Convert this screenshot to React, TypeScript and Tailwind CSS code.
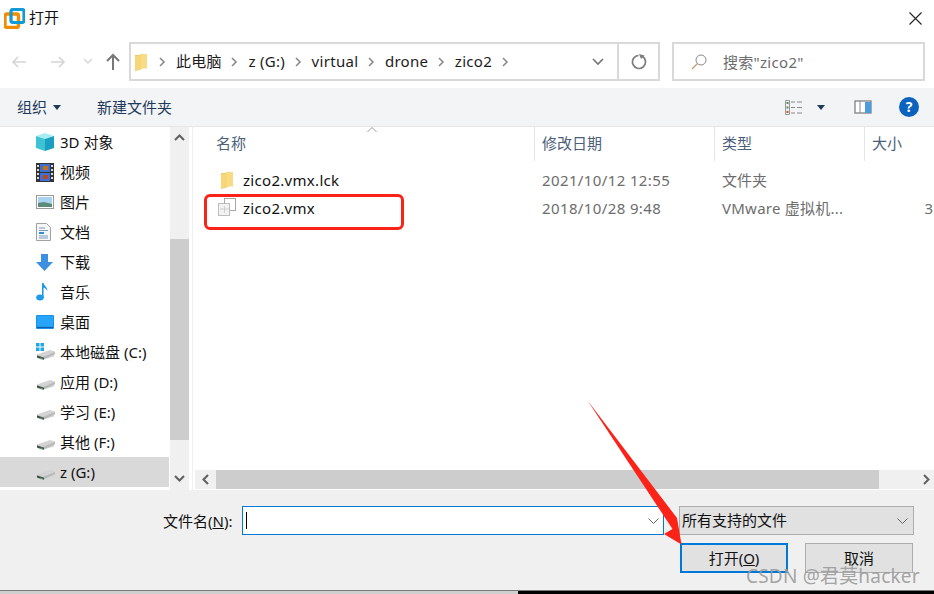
import { ReactNode } from "react";

const font = { fontFamily: '"Noto Sans", "Noto Sans CJK SC", sans-serif' };

function Chevron() {
  return (
    <svg width="8" height="12" viewBox="0 0 8 12" className="shrink-0">
      <path d="M2 2l4 4-4 4" fill="none" stroke="#8a8a8a" strokeWidth="1.6" />
    </svg>
  );
}

function FolderIcon({ className }: { className?: string }) {
  return (
    <svg width="13" height="18" viewBox="0 0 13 18" className={className}>
      <path d="M0 2h6l1-2v16l-7 2z" fill="#e8c35e" />
      <path d="M5 1h7v14.500h-7z" fill="#f8dc85" />
      <path d="M0 3l6-1v14l-6 2z" fill="#f6d675" />
    </svg>
  );
}

function DriveIcon({ win }: { win?: boolean }) {
  return (
    <svg width="20" height="18" viewBox="0 0 20 18">
      {win && (
        <g fill="#1ea5e8">
          <path d="M0 0h3.500v3.500H0zM4.500 0H8v3.500H4.500zM0 4.500h3.500V8H0zM4.500 4.500H8V8H4.500z" />
        </g>
      )}
      <path d="M1 11.500L14 7l5 1.500-1 5L6 17l-5-2z" fill="#d3d3d3" />
      <path d="M1 12l6 2 12-5v2L7 16.500 1 14.500z" fill="#b8b8b8" />
      <path d="M1 12.500l7 2.200v2L1 14.500z" fill="#3c4a44" />
      <path d="M4.500 14.500l2 .6v1l-2-.6z" fill="#4cc35a" />
    </svg>
  );
}

function CubeIcon() {
  return (
    <svg width="18" height="18" viewBox="0 0 18 18">
      <path d="M9 0l9 3-9 3-9-3z" fill="#a5eef2" />
      <path d="M0 3l9 3v12l-9-3z" fill="#3cc4d4" />
      <path d="M18 3L9 6v12l9-3z" fill="#1a9fc0" />
    </svg>
  );
}

function FilmIcon() {
  return (
    <svg width="18" height="19" viewBox="0 0 18 19">
      <rect width="18" height="19" fill="#333" />
      <rect x="4" y="1" width="10" height="8" fill="#3f6fd0" />
      <rect x="4" y="10" width="10" height="8" fill="#3f6fd0" />
      <rect x="7" y="3" width="5" height="4" fill="#c2701e" />
      <rect x="7" y="12" width="5" height="4" fill="#b5482a" />
      <path d="M1 2h2v2H1zM1 6h2v2H1zM1 10h2v2H1zM1 14h2v2H1zM15 2h2v2h-2zM15 6h2v2h-2zM15 10h2v2h-2zM15 14h2v2h-2z" fill="#ddd" />
    </svg>
  );
}

function PictureIcon() {
  return (
    <svg width="18" height="14" viewBox="0 0 18 14">
      <rect x=".5" y=".5" width="17" height="13" fill="#fff" stroke="#9a9a9a" />
      <rect x="2" y="2" width="14" height="10" fill="#a9d3ee" />
      <path d="M2 8l6-1 8 2v3H2z" fill="#5d8a78" />
    </svg>
  );
}

function DocIcon() {
  return (
    <svg width="15" height="18" viewBox="0 0 15 18">
      <path d="M.5.5h10l4 4v13H.5z" fill="#f6f6f6" stroke="#a0a0a0" />
      <path d="M3 5h6M3 7.500h9M3 13h9M3 15h9" stroke="#7a9cc0" />
      <path d="M3 10h5" stroke="#2e8fd8" strokeWidth="2" />
    </svg>
  );
}

function DownloadIcon() {
  return (
    <svg width="17" height="17" viewBox="0 0 17 17">
      <path d="M5 0h7v8h5l-8.500 9L0 8h5z" fill="#3d8fe0" />
    </svg>
  );
}

function MusicIcon() {
  return (
    <svg width="12" height="18" viewBox="0 0 12 18">
      <ellipse cx="4" cy="14.500" rx="3.800" ry="3" fill="#1e9be8" />
      <path d="M6 0h1.600c.5 3 4 4 3.800 8-1-2-2.500-3-3.800-3.200V15H6z" fill="#1e9be8" />
    </svg>
  );
}

function DesktopIcon() {
  return (
    <svg width="18" height="14" viewBox="0 0 18 14">
      <rect width="18" height="14" rx="1" fill="#1c8fe6" />
      <rect x="1" y="1" width="16" height="10.500" fill="#26a5fb" />
      <rect x="1" y="12" width="16" height="1" fill="#0d5fa8" />
    </svg>
  );
}

const places: { icon: ReactNode; label: string; selected?: boolean }[] = [
  { icon: <CubeIcon />, label: "3D 对象" },
  { icon: <FilmIcon />, label: "视频" },
  { icon: <PictureIcon />, label: "图片" },
  { icon: <DocIcon />, label: "文档" },
  { icon: <DownloadIcon />, label: "下载" },
  { icon: <MusicIcon />, label: "音乐" },
  { icon: <DesktopIcon />, label: "桌面" },
  { icon: <DriveIcon win />, label: "本地磁盘 (C:)" },
  { icon: <DriveIcon />, label: "应用 (D:)" },
  { icon: <DriveIcon />, label: "学习 (E:)" },
  { icon: <DriveIcon />, label: "其他 (F:)" },
  { icon: <DriveIcon />, label: "z (G:)", selected: true },
];

const crumbs = ["此电脑", "z (G:)", "virtual", "drone", "zico2"];

export default function App() {
  return (
    <div className="relative w-[934px] h-[594px] overflow-hidden bg-white flex flex-col text-[15px] leading-5 text-[#111]" style={font}>
      {/* Title bar */}
      <div className="h-[42px] shrink-0 flex items-center pl-1 pr-[12px]">
        <svg width="21" height="21" viewBox="0 0 21 21" className="mr-[4px] -mt-[6px]">
          <rect x="1" y="6" width="13.500" height="13.500" rx="2" fill="none" stroke="#f28c00" strokeWidth="3.400" />
          <rect x="7" y="1.500" width="13" height="13" rx="2" fill="none" stroke="#0f9ad8" strokeWidth="3.200" />
        </svg>
        <span className="-mt-[8px] text-[15px]">打开</span>
        <svg width="13" height="13" viewBox="0 0 13 13" className="ml-auto -mt-[6px]">
          <path d="M.5.500l12 12M12.500.500l-12 12" stroke="#222" strokeWidth="1.100" />
        </svg>
      </div>

      {/* Navigation row */}
      <div className="h-[46px] shrink-0 flex items-start">
        <div className="w-[129px] h-[39px] shrink-0 flex items-center pl-[11px]">
          <svg width="16" height="14" viewBox="0 0 16 14" className="mr-[23px]">
            <path d="M15 7H2M7 2L2 7l5 5" fill="none" stroke="#d5d5d5" strokeWidth="1.600" />
          </svg>
          <svg width="16" height="14" viewBox="0 0 16 14" className="mr-[17px]">
            <path d="M1 7h13M9 2l5 5-5 5" fill="none" stroke="#d5d5d5" strokeWidth="1.600" />
          </svg>
          <svg width="10" height="7" viewBox="0 0 10 7" className="mr-[13px]">
            <path d="M1 1l4 4 4-4" fill="none" stroke="#d5d5d5" strokeWidth="1.400" />
          </svg>
          <svg width="14" height="17" viewBox="0 0 14 17">
            <path d="M7 17V2M1 8l6-6 6 6" fill="none" stroke="#777" strokeWidth="2" />
          </svg>
        </div>
        <div className="w-[531px] h-[39px] shrink-0 border-2 border-[#d9d9d9] flex items-center">
          <FolderIcon className="ml-[4px] mr-[10px]" />
          <div className="flex items-center flex-1 text-[#1c1c1c] tracking-[0.3px]">
            {crumbs.map((c) => (
              <div key={c} className="flex items-center">
                <Chevron />
                <span className="ml-[10px] mr-[8.500px] mt-[-1px]">{c}</span>
              </div>
            ))}
            <Chevron />
          </div>
          <svg width="12" height="8" viewBox="0 0 12 8" className="mr-[13px]">
            <path d="M1 1l5 5 5-5" fill="none" stroke="#777" strokeWidth="1.700" />
          </svg>
          <div className="w-[41px] h-full border-l-2 border-[#d9d9d9] flex items-center justify-center">
            <svg width="16" height="16" viewBox="0 0 16 16">
              <path d="M11.500 2.500a6.500 6.500 0 1 1-4-1" fill="none" stroke="#7d7d7d" strokeWidth="1.700" />
              <path d="M8 0l5.500 1.500L10 5z" fill="#7d7d7d" />
            </svg>
          </div>
        </div>
        <div className="ml-[12px] w-[253px] h-[39px] shrink-0 border-2 border-[#d9d9d9] flex items-center pl-[17px] text-[#6d6d6d] tracking-[0.3px]">
          <svg width="16" height="16" viewBox="0 0 16 16" className="mr-[16px]">
            <circle cx="10" cy="6" r="5" fill="none" stroke="#8a8a8a" />
            <path d="M6.500 9.500L1 15" stroke="#c79a70" strokeWidth="1.200" />
          </svg>
          搜索"zico2"
        </div>
      </div>

      {/* Toolbar */}
      <div className="h-[39px] shrink-0 bg-[#f3f4f6] border-b border-[#e6e6e6] flex items-center pl-[17px] pr-[15px] text-[15px] text-[#1e395b]">
        <span>组织</span>
        <svg width="8" height="5" viewBox="0 0 8 5" className="ml-[6px] mr-[36px]">
          <path d="M0 0h8L4 5z" fill="#1e395b" />
        </svg>
        <span>新建文件夹</span>
        <svg width="17" height="15" viewBox="0 0 17 15" className="ml-auto mr-[15px]">
          <path d="M.5.500h4v14h-4z" fill="#eee" stroke="#999" />
          <path d="M1.500 2h2v2h-2zM1.500 6.500h2v2h-2z" fill="#5a8a5a" />
          <path d="M1.500 11h2v2h-2z" fill="#c05a2a" />
          <path d="M6 2h4M12 2h5M6 7.500h4M12 7.500h5M6 13h4M12 13h5" stroke="#888" />
        </svg>
        <svg width="8" height="5" viewBox="0 0 8 5" className="mr-[29px]">
          <path d="M0 0h8L4 5z" fill="#1e395b" />
        </svg>
        <svg width="18" height="14" viewBox="0 0 18 14" className="mr-[27px]">
          <rect x="1" y="1" width="16" height="12" fill="#fff" stroke="#8a8a8a" strokeWidth="1.400" />
          <rect x="11" y="2" width="6" height="11" fill="#4a9be0" />
          <path d="M6 1v12" stroke="#8a8a8a" />
        </svg>
        <div className="w-[20px] h-[20px] rounded-full bg-[#0b63bd] text-white text-[14px] font-bold flex items-center justify-center">?</div>
      </div>

      {/* Body */}
      <div className="h-[363px] shrink-0 flex">
        <div className="w-[170px] shrink-0 flex flex-col">
          {places.map((p) => (
            <div key={p.label} className={`h-[30px] shrink-0 flex items-center ${p.selected ? "bg-[#d9d9d9] w-[169px]" : ""}`}>
              <div className="w-[60px] pl-[36px] shrink-0 flex items-center">{p.icon}</div>
              <span className="text-[#111]">{p.label}</span>
            </div>
          ))}
        </div>

        {/* Sidebar scrollbar */}
        <div className="w-[19px] shrink-0 bg-[#f0f0f0] flex flex-col">
          <div className="h-[112px] shrink-0 pt-[7px] flex justify-center">
            <svg width="11" height="7" viewBox="0 0 11 7">
              <path d="M1 6l4.500-4.500L10 6" fill="none" stroke="#606060" strokeWidth="2" />
            </svg>
          </div>
          <div className="h-[201px] shrink-0 bg-[#cdcdcd]" />
          <div className="flex-1 flex items-end justify-center pb-[8px]">
            <svg width="11" height="7" viewBox="0 0 11 7">
              <path d="M1 1l4.500 4.500L10 1" fill="none" stroke="#606060" strokeWidth="2" />
            </svg>
          </div>
        </div>

        {/* File list */}
        <div className="flex-1 ml-[3px] border-l border-[#f0f0f0] min-w-0 flex flex-col">
          <div className="relative h-[34px] shrink-0 flex text-[15px] text-[#4c607a]">
            <div className="w-[342px] pl-[23px] border-r border-[#e5e5e5] flex items-center pb-[2px]">名称</div>
            <div className="w-[180px] pl-[7px] border-r border-[#e5e5e5] flex items-center pb-[2px]">修改日期</div>
            <div className="w-[150px] pl-[7px] border-r border-[#e5e5e5] flex items-center pb-[2px]">类型</div>
            <div className="flex-1 pl-[7px] flex items-center pb-[2px]">大小</div>
            <svg width="10" height="5" viewBox="0 0 10 5" className="absolute left-[174px] top-0">
              <path d="M.5 5L5 .5 9.500 5" fill="none" stroke="#999" />
            </svg>
          </div>
          <div className="h-[5px] shrink-0" />
          <div className="h-[28px] shrink-0 flex items-center">
            <div className="w-[342px] flex items-center pl-[28px] text-[#111] tracking-[0.3px]">
              <FolderIcon className="mr-[9px]" />
              zico2.vmx.lck
            </div>
            <div className="w-[180px] pl-[7px] text-[#6d6d6d] tracking-[0.38px]">2021/10/12 12:55</div>
            <div className="w-[150px] pl-[7px] text-[#6d6d6d]">文件夹</div>
          </div>
          <div className="h-[27px] shrink-0 flex items-center">
            <div className="w-[342px] flex items-center pl-[25px] text-[#111] tracking-[0.3px]">
              <svg width="19" height="18" viewBox="0 0 19 18" className="mr-[6px] -mt-[2px]">
                <rect x="6.500" y=".5" width="11" height="12" fill="#fff" stroke="#a8a8a8" />
                <rect x=".5" y="5.500" width="11" height="12" fill="#f2f2f2" stroke="#bdbdbd" />
                <path d="M6.500 8v7M2 11h9" stroke="#cfcfcf" />
              </svg>
              zico2.vmx
            </div>
            <div className="w-[180px] pl-[7px] text-[#6d6d6d] tracking-[0.38px]">2018/10/28 9:48</div>
            <div className="w-[150px] pl-[7px] text-[#6d6d6d] tracking-[0.25px] whitespace-nowrap">VMware 虚拟机...</div>
            <div className="flex-1 text-right pr-[1px] text-[#6d6d6d]">3</div>
          </div>
          <div className="flex-1" />
          {/* Horizontal scrollbar */}
          <div className="h-[19px] shrink-0 mb-[1px] ml-[2px] bg-[#f0f0f0] flex">
            <div className="w-[21px] flex items-center justify-center">
              <svg width="7" height="11" viewBox="0 0 7 11">
                <path d="M6 1L1.500 5.500 6 10" fill="none" stroke="#606060" strokeWidth="2" />
              </svg>
            </div>
            <div className="w-[663px] bg-[#cdcdcd]" />
            <div className="flex-1 flex items-center justify-end pr-[4px]">
              <svg width="7" height="11" viewBox="0 0 7 11">
                <path d="M1 1l4.500 4.500L1 10" fill="none" stroke="#606060" strokeWidth="2" />
              </svg>
            </div>
          </div>
        </div>
      </div>

      {/* Footer */}
      <div className="h-[101px] shrink-0 bg-[#f0f0f0] border-b border-[#7a7a7a] pt-[16px] flex flex-col">
        <div className="flex items-center h-[29px]">
          <span className="ml-[163px] w-[79px] text-[15px] text-[#111] whitespace-nowrap">
            文件名(<span className="underline">N</span>):
          </span>
          <div className="w-[422px] h-[29px] bg-white border border-[#0078d7] flex items-center pl-[3px] pr-[4px]">
            <div className="w-[1px] h-[17px] bg-black" />
            <svg width="11" height="6" viewBox="0 0 11 6" className="ml-auto">
              <path d="M.5.500l5 5 5-5" fill="none" stroke="#666" />
            </svg>
          </div>
          <div className="ml-[15px] w-[235px] h-[29px] bg-[#e1e1e1] border border-[#adadad] flex items-center pl-[2px] pr-[5px] text-[15px]">
            <span className="-mt-[2px]">所有支持的文件</span>
            <svg width="11" height="6" viewBox="0 0 11 6" className="ml-auto">
              <path d="M.5.500l5 5 5-5" fill="none" stroke="#666" />
            </svg>
          </div>
        </div>
        <div className="flex mt-[8px] ml-[680px] text-[15px]">
          <div className="w-[108px] h-[30px] bg-[#e1e1e1] border-2 border-[#0078d7] flex items-center justify-center">
            打开(<span className="underline">O</span>)
          </div>
          <div className="ml-[17px] w-[108px] h-[30px] bg-[#e1e1e1] border border-[#adadad] flex items-center justify-center">取消</div>
        </div>
      </div>

      {/* Cropped edge of the window behind */}
      <div className="flex-1 flex">
        <div className="w-[518px] bg-[#cfcfcf]" />
        <div className="flex-1 bg-black" />
      </div>

      {/* Annotations drawn over the screenshot */}
      <div className="absolute left-[204px] top-[194px] w-[200px] h-[36px] border-[3px] border-[#fb2318] rounded-[6px]" />
      <svg width="934" height="594" viewBox="0 0 934 594" className="absolute inset-0 pointer-events-none">
        <path d="M587.500 400.500L677 518l4.500 26.500L664 534l8.500-5z" fill="#fb2318" />
      </svg>
      <div className="absolute left-[746px] top-[564px] text-[19px] leading-6 tracking-[0.2px] text-[#9a9a9a]/90 whitespace-nowrap">
        CSDN @君莫hacker
      </div>
    </div>
  );
}
